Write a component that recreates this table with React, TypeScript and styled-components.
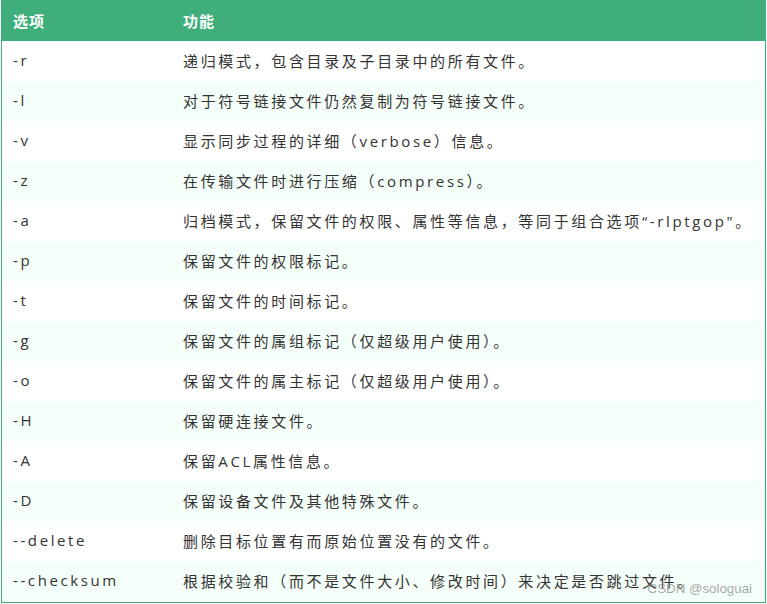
import React from "react";
import styled, { createGlobalStyle } from "styled-components";

const Global = createGlobalStyle`
  html, body { margin: 0; padding: 0; background: #fff; }
  body { font-family: "Open Sans", "Noto Sans CJK SC", sans-serif; }
`;

const GREEN = "#3fae7b";

const Frame = styled.div`
  position: relative;
  width: 765px;
  height: 603px;
  box-sizing: border-box;
  margin-left: 1px;
  border: 1px solid ${GREEN};
  border-top: none;
  display: flex;
  flex-direction: column;
  overflow: hidden;
`;

const Header = styled.div`
  display: grid;
  grid-template-columns: 170px 1fr;
  height: 41px;
  align-items: center;
  background: ${GREEN};
  margin: 0 0 0 -1px;
`;

const HeadCell = styled.div`
  padding-left: 12px;
  color: #fff;
  font-weight: 700;
  font-size: 15px;
  font-family: "Noto Sans CJK SC", sans-serif;
  letter-spacing: 1px;
`;

const Row = styled.div<{ $alt: boolean }>`
  display: grid;
  grid-template-columns: 170px 1fr;
  height: 40px;
  align-items: center;
  background: ${(p) => (p.$alt ? "#f5fff9" : "#ffffff")};
  color: #333;
`;

const OptCell = styled.div`
  padding-left: 11px;
  margin-top: -2px;
  font-family: "Open Sans", sans-serif;
  font-size: 15px;
  letter-spacing: 2.6px;
`;

const DescCell = styled.div`
  padding-left: 11px;
  margin-top: -2px;
  font-family: "Open Sans", "Noto Sans CJK SC", sans-serif;
  font-size: 15px;
  letter-spacing: 2.65px;
  white-space: nowrap;
`;

const Watermark = styled.div`
  position: absolute;
  right: 13px;
  bottom: 6px;
  font-family: "Liberation Sans", sans-serif;
  font-size: 13.3px;
  color: rgba(130, 130, 130, 0.7);
  pointer-events: none;
`;

const rows: [string, string][] = [
  ["-r", "递归模式，包含目录及子目录中的所有文件。"],
  ["-l", "对于符号链接文件仍然复制为符号链接文件。"],
  ["-v", "显示同步过程的详细（verbose）信息。"],
  ["-z", "在传输文件时进行压缩（compress）。"],
  ["-a", "归档模式，保留文件的权限、属性等信息，等同于组合选项“-rlptgop\"。"],
  ["-p", "保留文件的权限标记。"],
  ["-t", "保留文件的时间标记。"],
  ["-g", "保留文件的属组标记（仅超级用户使用）。"],
  ["-o", "保留文件的属主标记（仅超级用户使用）。"],
  ["-H", "保留硬连接文件。"],
  ["-A", "保留ACL属性信息。"],
  ["-D", "保留设备文件及其他特殊文件。"],
  ["--delete", "删除目标位置有而原始位置没有的文件。"],
  ["--checksum", "根据校验和（而不是文件大小、修改时间）来决定是否跳过文件。"],
];

export default function App() {
  return (
    <>
      <Global />
      <Frame>
        <Header>
          <HeadCell>选项</HeadCell>
          <HeadCell>功能</HeadCell>
        </Header>
        {rows.map(([o, d], i) => (
          <Row key={o} $alt={i % 2 === 1}>
            <OptCell>{o}</OptCell>
            <DescCell>{d}</DescCell>
          </Row>
        ))}
        <Watermark>CSDN @sologuai</Watermark>
      </Frame>
    </>
  );
}
